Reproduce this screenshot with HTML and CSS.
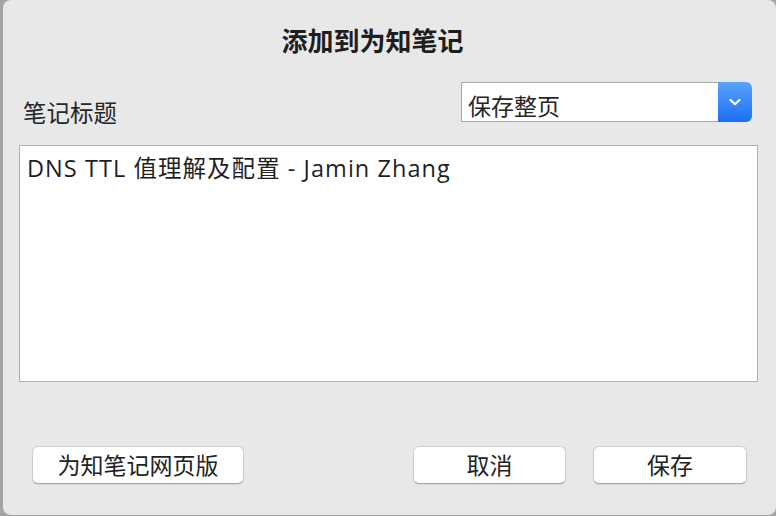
FILE: index.html
```html
<!DOCTYPE html>
<html lang="zh">
<head>
<meta charset="utf-8">
<link rel="stylesheet" href="styles.css">
</head>
<body>
<div class="backdrop">
  <div class="dialog">
    <div class="title">添加到为知笔记</div>
    <div class="row">
      <div class="label">笔记标题</div>
      <div class="select">
        <div class="select-value">保存整页</div>
        <div class="select-btn">
          <svg width="14" height="10" viewBox="0 0 14 10"><path d="M2.5 3 L7 7.2 L11.5 3" fill="none" stroke="#fff" stroke-width="2.2" stroke-linecap="round" stroke-linejoin="round"/></svg>
        </div>
      </div>
    </div>
    <div class="textbox">DNS TTL 值理解及配置 - Jamin Zhang</div>
    <div class="buttons">
      <div class="btn btn-web">为知笔记网页版</div>
      <div class="spacer"></div>
      <div class="btn btn-cancel">取消</div>
      <div class="btn btn-save">保存</div>
    </div>
  </div>
</div>
</body>
</html>
```

FILE: styles.css
```css
html, body {
  margin: 0;
  padding: 0;
  width: 776px;
  height: 516px;
  overflow: hidden;
}
body {
  background: #a3a3a3;
  font-family: "Liberation Sans", "Noto Sans CJK SC", sans-serif;
  color: #222;
}
.backdrop {
  display: flex;
  padding-left: 3px;
}
.dialog {
  width: 773px;
  height: 515px;
  box-sizing: border-box;
  background: #e8e8e8;
  border-radius: 8px;
  display: flex;
  flex-direction: column;
  padding: 0 18px 0 16px;
}
.title {
  margin-top: 25px;
  height: 30px;
  line-height: 30px;
  text-align: center;
  font-family: "Noto Sans CJK SC", sans-serif;
  font-weight: bold;
  font-size: 26px;
  padding-right: 32px;
  color: #1e1e1e;
}
.row {
  margin-top: 27px;
  display: flex;
  align-items: flex-end;
  justify-content: space-between;
}
.label {
  font-family: "Noto Sans CJK SC", sans-serif;
  font-size: 23.5px;
  line-height: 26px;
  padding-left: 4px;
  margin-bottom: -3px;
  color: #262626;
}
.select {
  width: 291px;
  height: 40px;
  display: flex;
  margin-right: 6px;
}
.select-value {
  flex: 1;
  background: #fff;
  border: 1px solid #a9a9a9;
  border-right: none;
  font-family: "Noto Sans CJK SC", sans-serif;
  font-size: 23px;
  line-height: 44px;
  padding-left: 6px;
  height: 38px;
  overflow: hidden;
  color: #262626;
}
.select-btn {
  width: 34px;
  height: 40px;
  border-radius: 0 6px 6px 0;
  background: linear-gradient(#5aa3fd, #1c6ff4);
  display: flex;
  align-items: center;
  justify-content: center;
}
.textbox {
  margin-top: 23px;
  width: 739px;
  height: 237px;
  box-sizing: border-box;
  background: #fff;
  border: 1px solid #b0b0b0;
  padding: 8px 0 0 7px;
  font-family: "Open Sans", "Noto Sans CJK SC", sans-serif;
  font-size: 23.5px;
  letter-spacing: 1.05px;
  line-height: 28px;
  color: #1f1f1f;
}
.buttons {
  margin-top: 64px;
  display: flex;
  align-items: center;
  padding-left: 13px;
}
.spacer { flex: 1; }
.btn {
  height: 38px;
  box-sizing: border-box;
  background: #fff;
  border: 1px solid #cdcdcd;
  border-bottom-color: #a8a8a8;
  border-radius: 6px;
  box-shadow: 0 1px 1px rgba(0,0,0,0.08);
  font-family: "Noto Sans CJK SC", sans-serif;
  font-size: 23px;
  line-height: 35px;
  text-align: center;
  color: #222;
}
.btn-web { width: 212px; }
.btn-cancel { width: 153px; }
.btn-save { width: 154px; margin-left: 27px; margin-right: 11px; }
```
